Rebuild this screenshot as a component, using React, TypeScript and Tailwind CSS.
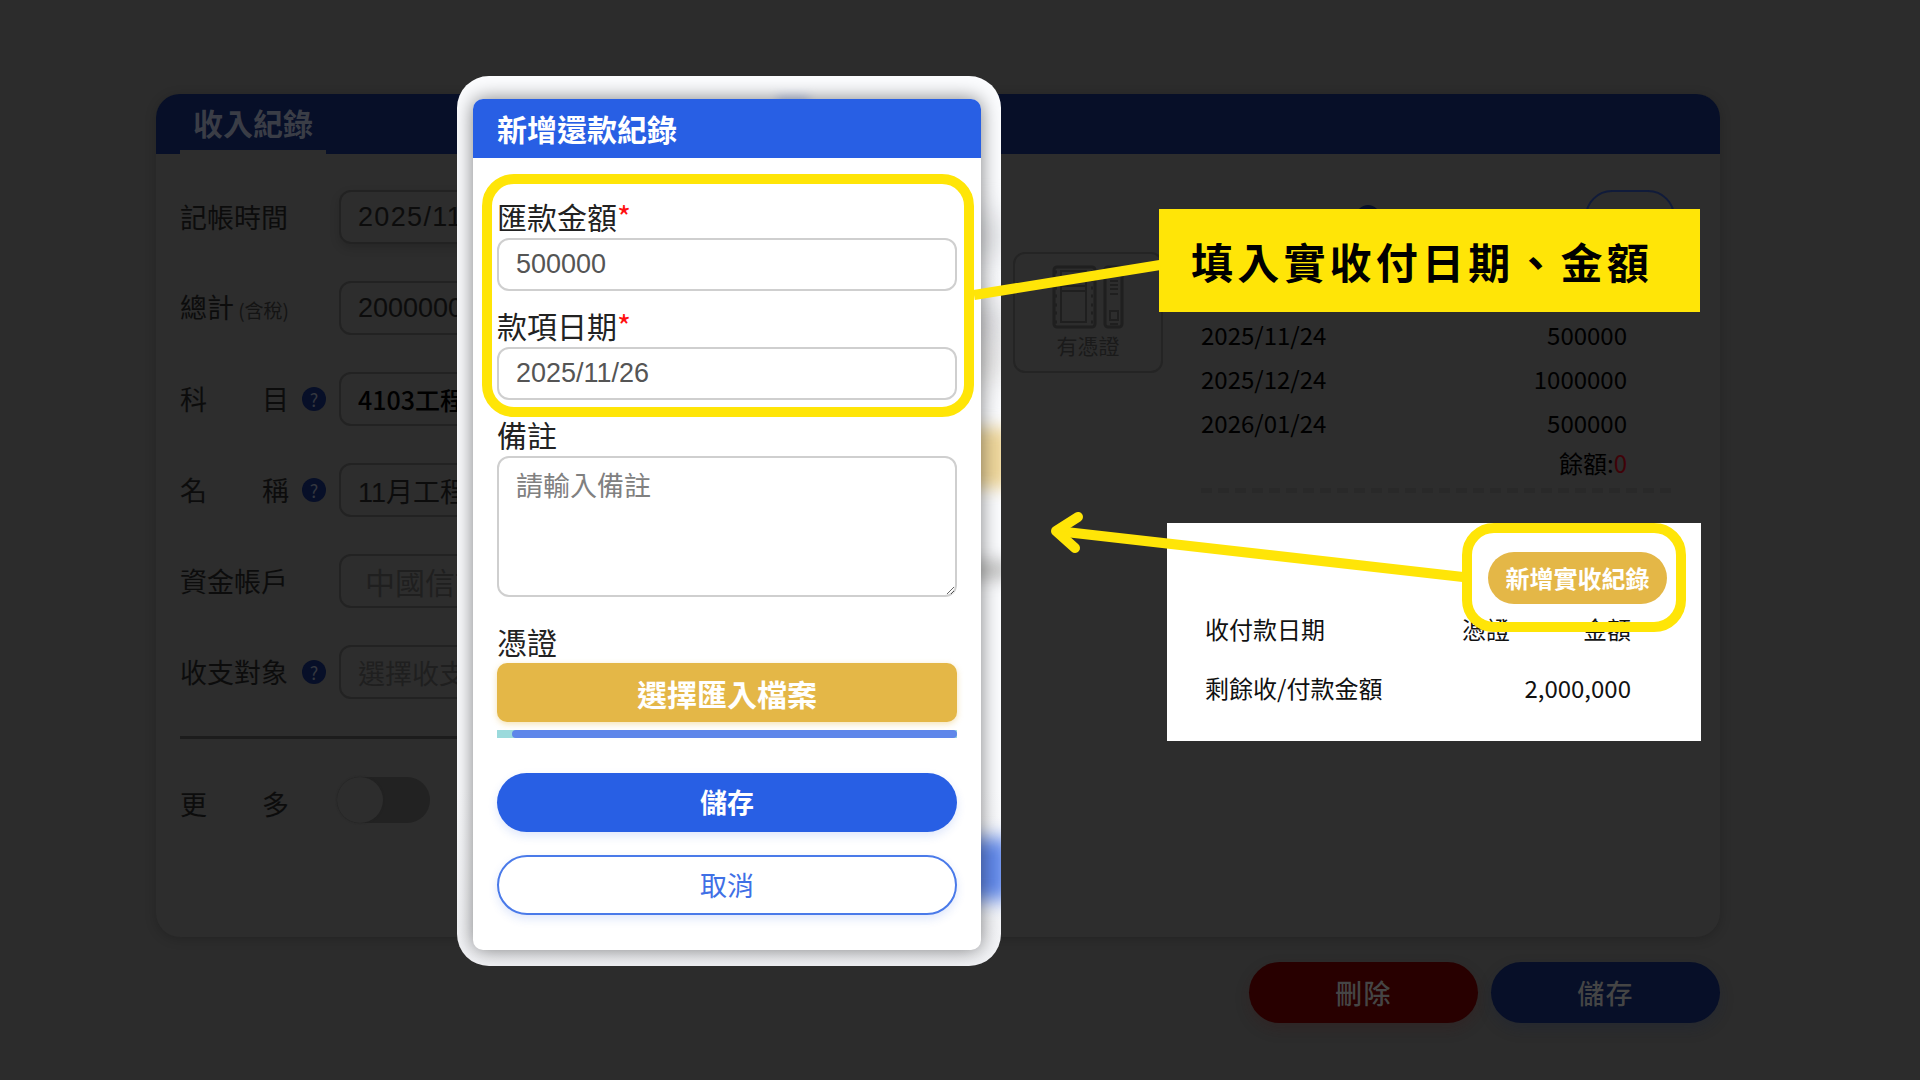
import { ReactNode } from "react";

const formRows = [
  { id: "time", label: ["記帳時間"], value: "2025/11/24", style: "font-['Liberation_Sans','Noto_Sans_CJK_TC',sans-serif] text-[27px] tracking-wider text-[#0c0c0c] px-[17px]", box: "shadow-[0_4px_10px_rgba(0,0,0,0.15)]" },
  { id: "total", label: ["總計"], note: "(含稅)", value: "2000000", style: "font-['Liberation_Sans','Noto_Sans_CJK_TC',sans-serif] text-[27px] text-[#0c0c0c] px-[17px]" },
  { id: "subject", label: ["科", "目"], help: true, value: "4103工程收入", style: "text-[25px] font-medium text-black px-[17px]" },
  { id: "name", label: ["名", "稱"], help: true, value: "11月工程款", style: "font-['Liberation_Sans','Noto_Sans_CJK_TC',sans-serif] text-[27px] text-[#0c0c0c] px-[17px]" },
  { id: "account", label: ["資金帳戶"], value: "中國信託", style: "text-[30px] text-[#1f1f1f] px-6" },
  { id: "partner", label: ["收支對象"], help: true, placeholder: "選擇收支對象", style: "text-[27px] placeholder:text-[#1f1f1f] px-[17px]" },
];

const installments = [
  { date: "2025/11/24", amount: "500000" },
  { date: "2025/12/24", amount: "1000000" },
  { date: "2026/01/24", amount: "500000" },
];

const HelpIcon = () => (
  <span className="flex h-6 w-6 shrink-0 items-center justify-center rounded-full bg-[#070f28] text-[18px] leading-6 text-[#34373f]">
    ?
  </span>
);

const VoucherIcon = () => (
  <svg className="h-16 w-[72px]" viewBox="0 0 72 64" fill="none" stroke="#1f1f1f" strokeWidth="3">
    <rect x="2" y="2" width="41" height="60" rx="3" />
    <rect x="9" y="6" width="25" height="51" strokeWidth="2" />
    <path d="M9 21h25M9 26h25M10 6h24" strokeWidth="2" />
    <path d="M3 7h2M3 15h2M3 23h2M3 31h2M3 40h2M3 48h2M3 57h2M39 7h2M39 15h2M39 23h2M39 31h2M39 40h2M39 48h2M39 57h2" />
    <rect x="53" y="2" width="17" height="60" rx="3" />
    <path d="M58 16h8M58 20h8M58 24h8M58 29h8" strokeWidth="2" />
    <rect x="58" y="46" width="8" height="9" strokeWidth="2" />
    <path d="M58 59h8" strokeWidth="2" />
  </svg>
);

const Field = ({ id, label, required, children }: { id: string; label: string; required?: boolean; children: ReactNode }) => (
  <div className="flex flex-col">
    <label htmlFor={id} className="pb-1 text-[30px] leading-9 text-[#222]">
      {label}
      {required && <span className="text-[#ff1010]">*</span>}
    </label>
    {children}
  </div>
);

const IncomeRecord = () => (
  <div className="px-[156px] pt-[94px] pb-14 lg:pr-[200px]">
    <section className="overflow-hidden rounded-3xl bg-[#2d2d2d] shadow-[0_2px_12px_rgba(0,0,0,0.2)]">
      <header className="flex h-[60px] bg-[#070f28] px-6">
        <h1 className="border-b-4 border-[#2d2d2d] px-[13px] text-[30px] leading-[56px] font-bold text-[#3a3d46]">
          收入紀錄
        </h1>
      </header>
      <div className="flex items-start pt-9 pr-[45px] pl-6">
        <form className="flex flex-1 flex-col gap-[37px] pb-[113px]">
          {formRows.map((row) => (
            <div key={row.id} className="flex h-[54px] items-center">
              <label htmlFor={row.id} className="flex w-[109px] items-baseline justify-between text-[27px] leading-10 whitespace-nowrap text-[#0c0c0c]">
                {row.label.map((part) => (
                  <span key={part}>{part}</span>
                ))}
                {row.note && <span className="text-[19px] text-[#141414]">{row.note}</span>}
              </label>
              <div className="flex w-[50px] shrink-0 pl-[13px]">{row.help && <HelpIcon />}</div>
              <input
                id={row.id}
                defaultValue={row.value}
                placeholder={row.placeholder}
                className={`h-full min-w-0 flex-1 rounded-xl border-2 border-[#222] ${row.style} ${row.box ?? ""}`}
              />
            </div>
          ))}
          <hr className="h-[3px] border-0 bg-[#1c1c1c]" />
          <div className="flex items-center">
            <label htmlFor="more" className="flex w-[109px] justify-between pt-2 text-[27px] leading-[40px] text-[#0c0c0c]">
              <span>更</span>
              <span>多</span>
            </label>
            <input
              id="more"
              type="checkbox"
              role="switch"
              className="ml-12 h-[46px] w-[93px] appearance-none rounded-full bg-[#222] before:block before:h-[46px] before:w-[46px] before:rounded-full before:bg-[#2d2d2d] before:shadow-[0_0_2px_#222]"
            />
          </div>
        </form>

        <button className="mt-[62px] ml-[33px] flex h-[121px] w-[150px] flex-col items-center rounded-xl border-2 border-[#242424] pt-[11px]">
          <VoucherIcon />
          <span className="text-[21px] leading-8 text-[#1a1a1a]">有憑證</span>
        </button>

        <div className="ml-[38px] w-[474px]">
          <div className="flex h-[54px] items-center justify-between pl-[155px]">
            <HelpIcon />
            <button aria-label="編輯" className="h-[54px] w-[90px] rounded-full border-2 border-[#101b3a]" />
          </div>
          <table className="mt-[69px] w-[426px] text-[24px] text-black">
            <tbody>
              {installments.map((item) => (
                <tr key={item.date} className="h-11">
                  <td className="p-0">{item.date}</td>
                  <td className="p-0 text-right">{item.amount}</td>
                </tr>
              ))}
            </tbody>
          </table>
          <p className="w-[426px] text-right text-[24px] leading-[35px] text-black">
            餘額:<span className="text-[#400208]">0</span>
          </p>
          <div className="mt-2 h-[5px] bg-[repeating-linear-gradient(90deg,#292929_0_11px,transparent_11px_17px)]" />
        </div>
      </div>
    </section>
    <div className="mt-[25px] flex justify-end gap-[13px] text-[27px] font-medium tracking-wider text-[#454545]">
      <button className="h-[61px] w-[229px] rounded-full bg-[#280000] pt-[2px] shadow-[0_6px_14px_rgba(60,20,20,0.25)]">刪除</button>
      <button className="h-[61px] w-[229px] rounded-full bg-[#070f28] pt-[2px] shadow-[0_6px_14px_rgba(20,30,60,0.25)]">儲存</button>
    </div>
  </div>
);

const RepaymentDialog = () => (
  <div className="absolute top-[76px] left-[457px] w-[544px] overflow-hidden rounded-[32px] bg-linear-to-b from-[#fcfdff] from-80% to-[#f3f4f7] pt-[23px] pr-5 pb-4 pl-4">
    {/* page behind the dialog, out of focus */}
    <div className="absolute top-[20px] left-[320px] h-3 w-8 bg-[#c9d5f3] blur-[5px]" />
    <div className="absolute top-[140px] right-0 h-10 w-8 bg-[#d3d4d8] blur-lg" />
    <div className="absolute top-[225px] right-0 h-12 w-8 bg-[#cfcfd3] blur-lg" />
    <div className="absolute top-[270px] right-0 h-8 w-8 bg-[#d6d4d2] blur-lg" />
    <div className="absolute top-[352px] right-[-10px] h-[60px] w-12 bg-[#efd79b] blur-[8px]" />
    <div className="absolute top-[484px] right-[-10px] h-5 w-12 bg-[#c4c4c4] blur-[8px]" />
    <div className="absolute top-[762px] right-[-10px] h-[62px] w-12 bg-[#6088ea] blur-[9px]" />

    <div role="dialog" aria-labelledby="dialog-title" className="relative rounded-[10px] bg-white shadow-[0_0_20px_rgba(0,0,0,0.5)]">
      <h2 id="dialog-title" className="rounded-t-[10px] bg-[#285fe4] px-6 text-[30px] leading-[59px] font-bold text-white">
        新增還款紀錄
      </h2>
      <form className="flex flex-col px-6 pt-10 pb-[35px]">
        <div className="relative flex flex-col gap-4">
          <Field id="amount" label="匯款金額" required>
            <input
              id="amount"
              inputMode="numeric"
              defaultValue="500000"
              className="h-[53px] rounded-xl border-2 border-[#cfcfcf] px-[17px] font-['Liberation_Sans',sans-serif] text-[27px] text-[#555]"
            />
          </Field>
          <Field id="date" label="款項日期" required>
            <input
              id="date"
              defaultValue="2025/11/26"
              className="h-[53px] rounded-xl border-2 border-[#cfcfcf] px-[17px] font-['Liberation_Sans',sans-serif] text-[27px] text-[#555]"
            />
          </Field>
          <div className="pointer-events-none absolute -top-6 -right-[17px] -bottom-[17px] -left-[15px] rounded-[32px] border-10 border-[#ffe507]" />
        </div>
        <div className="mt-4">
          <Field id="remark" label="備註">
            <textarea
              id="remark"
              placeholder="請輸入備註"
              className="h-[141px] rounded-xl border-2 border-[#cfcfcf] px-[17px] py-[7px] text-[27px] leading-10 placeholder:text-[#808080]"
            />
          </Field>
        </div>
        <div className="mt-[26px]">
          <Field id="voucher" label="憑證">
            <button id="voucher" type="button" className="h-[59px] rounded-[10px] bg-[#e4b747] pt-[2px] text-[30px] font-bold text-white shadow-[0_2px_6px_rgba(228,183,71,0.4)]">
              選擇匯入檔案
            </button>
          </Field>
          <div className="mt-2 h-2 bg-[#9bdadc] pl-[15px]">
            <div className="h-2 rounded-sm bg-[#5f87ea]" />
          </div>
        </div>
        <button type="button" className="mt-[35px] h-[59px] rounded-full bg-[#285fe4] text-[27px] font-bold text-white shadow-[0_4px_10px_rgba(40,95,228,0.15)]">
          儲存
        </button>
        <button type="button" className="mt-[23px] h-[60px] rounded-full border-2 border-[#4a7ae9] bg-white text-[27px] text-[#3f70e6] shadow-[0_4px_10px_rgba(40,95,228,0.15)]">
          取消
        </button>
      </form>
    </div>
  </div>
);

const ReceiptCard = () => (
  <section className="absolute top-[523px] left-[1167px] h-[218px] w-[534px] bg-white pt-[29px]">
    <div className="flex justify-end pr-[34px]">
      <div className="relative">
        <button className="block h-[52px] w-[179px] rounded-full bg-[#e4b747] text-[24px] font-bold whitespace-nowrap text-white">新增實收紀錄</button>
        <div className="pointer-events-none absolute -top-[29px] -right-[19px] -bottom-7 -left-[26px] z-10 rounded-[32px] border-10 border-[#ffe507]" />
      </div>
    </div>
    <table className="ml-[38px] w-[426px] text-[24px] text-[#111]">
      <thead>
        <tr className="h-[50px]">
          <th className="w-[257px] p-0 text-left font-normal">收付款日期</th>
          <th className="p-0 text-left font-normal">憑證</th>
          <th className="p-0 text-right font-normal">金額</th>
        </tr>
      </thead>
      <tbody>
        <tr className="h-[68px]">
          <td className="p-0">剩餘收/付款金額</td>
          <td className="p-0 text-right" colSpan={2}>2,000,000</td>
        </tr>
      </tbody>
    </table>
  </section>
);

export default function App() {
  return (
    <main className="relative min-h-screen overflow-hidden bg-[#2c2c2c] font-['Noto_Sans_CJK_TC',sans-serif]">
      <IncomeRecord />
      <RepaymentDialog />
      <ReceiptCard />
      <p className="absolute top-[209px] left-[1159px] w-[541px] bg-[#ffe507] pl-8 text-[42px] leading-[103px] font-bold tracking-widest whitespace-nowrap text-black">
        填入實收付日期、金額
      </p>
      {/* callout lines */}
      <svg className="pointer-events-none absolute top-0 left-0 h-[1080px] w-[1920px]" viewBox="0 0 1920 1080" fill="none" stroke="#ffe507" strokeWidth="10">
        <path d="M974 295L1160 265" />
        <path d="M1463 577L1057 531" />
        <path d="M1078 517L1056 531L1075 548" strokeLinecap="round" strokeLinejoin="round" />
      </svg>
    </main>
  );
}
